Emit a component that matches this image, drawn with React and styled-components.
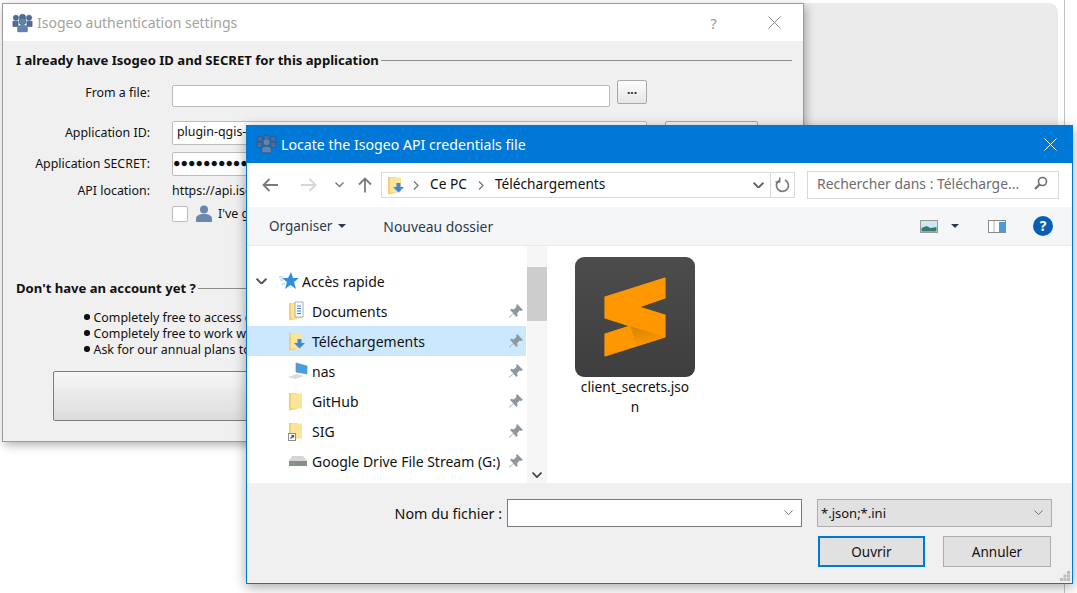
import React from "react";
import styled, { createGlobalStyle } from "styled-components";

const GlobalStyle = createGlobalStyle`
  html, body {
    margin: 0;
    padding: 0;
    background: #fff;
    overflow: hidden;
  }
  * {
    box-sizing: border-box;
  }
`;

const UI_FONT = `"Noto Sans", "Open Sans", sans-serif`;

const Desktop = styled.div`
  position: relative;
  width: 1077px;
  height: 593px;
  overflow: hidden;
  background: #fff;
  font-family: ${UI_FONT};
`;

const PagePanel = styled.div`
  position: absolute;
  left: 780px;
  top: 3px;
  width: 278px;
  height: 400px;
  background: #ebebeb;
  border-radius: 9px;
`;

const PageEdge = styled.div`
  position: absolute;
  left: 1064px;
  top: 0;
  width: 1px;
  height: 593px;
  background: #c4c4c4;
`;

/* back window */
const BackWindow = styled.div`
  position: absolute;
  left: 2px;
  top: 3px;
  width: 802px;
  height: 439px;
  display: flex;
  flex-direction: column;
  border: 1px solid #9b9b9b;
  background: #f0f0f0;
  box-shadow: 2px 3px 9px rgba(0, 0, 0, 0.3);
`;

const BackTitleBar = styled.div`
  height: 37px;
  flex: none;
  background: #fff;
  display: flex;
  align-items: center;
  padding-left: 9px;
  gap: 4px;
  color: #a3a3a3;
  font-size: 14px;
`;

const BackTitle = styled.span`
  flex: 1;
`;

const TitleGlyph = styled.span`
  width: 57px;
  display: flex;
  justify-content: center;
  color: #999;
  font-size: 15px;
`;

const BackBody = styled.div`
  flex: 1;
  display: flex;
  flex-direction: column;
  padding: 9px 11px 0 13px;
  color: #111;
  font-size: 12.4px;
  line-height: 17px;
`;

const SectionHead = styled.div`
  display: flex;
  align-items: center;
  gap: 2px;
  height: 20px;
  margin-top: ${(p) => p.$top || 0}px;
  font-weight: 700;
  font-size: 13.1px;
  white-space: nowrap;
  &::after {
    content: "";
    flex: 1;
    height: 1px;
    background: #8c8c8c;
  }
`;

const TextField = styled.div`
  height: ${(p) => p.$h || 22}px;
  width: ${(p) => p.$w || 438}px;
  margin-top: ${(p) => p.$top || 0}px;
  background: #fff;
  border: 1px solid #bcbcbc;
  border-radius: 2px;
  padding-left: 4px;
  line-height: ${(p) => (p.$h || 22) - 4}px;
  text-indent: ${(p) => p.$indent || 0}px;
  white-space: nowrap;
  overflow: hidden;
`;

const FormRow = styled.div`
  display: flex;
  align-items: center;
  margin-top: ${(p) => p.$top || 0}px;
`;

const FileRow = styled(FormRow)`
  align-items: flex-start;
  label {
    line-height: 26px;
  }
`;

const RowLabel = styled.label`
  width: 134px;
  margin-right: 22px;
  margin-bottom: ${(p) => p.$raise || 0}px;
  text-align: right;
  white-space: nowrap;
`;

const DotsButton = styled.button`
  width: 30px;
  height: 24px;
  margin-left: 7px;
  padding: 0 0 6px;
  border: 1px solid #a9a9a9;
  border-radius: 2px;
  background: linear-gradient(#fdfdfd, #e6e6e6);
  font: 700 12px ${UI_FONT};
  color: #222;
`;

const SideButton = styled.div`
  width: 93px;
  height: 24px;
  margin-left: 18px;
  border: 1px solid #a9a9a9;
  border-radius: 2px;
  background: #f5f5f5;
`;

const CheckRow = styled.div`
  display: flex;
  align-items: center;
  margin: 6px 0 0 156px;
  height: 17px;
  white-space: nowrap;
`;

const CheckBox = styled.div`
  width: 16px;
  height: 16px;
  margin-right: 8px;
  background: #fff;
  border: 1px solid #bcbcbc;
  border-radius: 2px;
`;

const CheckText = styled.span`
  margin-left: 6px;
`;

const BulletList = styled.ul`
  list-style: none;
  margin: 11px 0 0 68px;
  padding: 0;
  white-space: nowrap;
`;

const Bullet = styled.li`
  display: flex;
  align-items: center;
  gap: 4px;
  height: 16px;
  &::before {
    content: "";
    flex: none;
    width: 5.5px;
    height: 5.5px;
    border-radius: 50%;
    background: #111;
  }
`;

const BigButton = styled.div`
  width: 700px;
  height: 50px;
  margin: 14px 0 0 37px;
  border: 1px solid #7d7d7d;
  border-radius: 2px;
  background: linear-gradient(#f6f6f6, #dcdcdc);
`;

/* front window */
const FrontWindow = styled.div`
  position: absolute;
  left: 246px;
  top: 125px;
  width: 827px;
  height: 459px;
  display: flex;
  flex-direction: column;
  border: 1px solid #0078d7;
  border-top: none;
  background: #fff;
  box-shadow: 0 3px 12px rgba(0, 0, 0, 0.35);
`;

const FrontTitleBar = styled.div`
  height: 38px;
  flex: none;
  margin: 0 -1px;
  background: #0078d7;
  color: #fff;
  display: flex;
  align-items: center;
  padding-left: 10px;
  gap: 4px;
  font-size: 14.15px;
`;

const FrontTitle = styled.span`
  flex: 1;
`;

const CloseSlot = styled.span`
  width: 46px;
  display: flex;
  justify-content: center;
`;

const NavRow = styled.div`
  height: 44px;
  flex: none;
  display: flex;
  align-items: center;
`;

const NavButtons = styled.div`
  width: 134px;
  flex: none;
  display: flex;
  align-items: center;
`;

const NavSlot = styled.span`
  width: ${(p) => p.$w}px;
  display: flex;
  justify-content: center;
`;

const AddressBar = styled.div`
  width: 414px;
  height: 26px;
  display: flex;
  align-items: center;
  border: 1px solid #d9d9d9;
  font-size: 13.7px;
  color: #111;
  padding-left: 5px;
`;

const Crumbs = styled.div`
  flex: 1;
  display: flex;
  align-items: center;
  padding-bottom: 4px;
  white-space: nowrap;
`;

const CrumbSep = styled.span`
  margin: 4px 11px 0 ${(p) => p.$left}px;
  display: flex;
`;

const AddressEnd = styled.span`
  width: 24px;
  height: 100%;
  display: flex;
  align-items: center;
  justify-content: center;
  border-left: ${(p) => (p.$line ? "1px solid #d9d9d9" : "none")};
`;

const SearchBox = styled.div`
  width: 252px;
  height: 28px;
  margin-left: 12px;
  border: 1px solid #d9d9d9;
  display: flex;
  align-items: center;
  justify-content: space-between;
  padding: 0 10px 4px 9px;
  color: #6d6d6d;
  font-size: 13.9px;
  white-space: nowrap;
`;

const Toolbar = styled.div`
  height: 39px;
  flex: none;
  background: #f5f6f7;
  border-bottom: 1px solid #e8e9ea;
  display: flex;
  align-items: center;
  padding: 0 19px 0 22px;
  color: #2a3a50;
  font-size: 13.5px;
`;

const ToolItem = styled.span`
  display: flex;
  align-items: center;
  gap: ${(p) => p.$gap || 6}px;
  margin-right: ${(p) => p.$mr || 0}px;
  margin-left: ${(p) => p.$ml || "0"};
  font-size: ${(p) => p.$size || 13.5}px;
`;

const Content = styled.div`
  flex: 1;
  display: flex;
  min-height: 0;
  background: #fff;
`;

const Sidebar = styled.nav`
  width: 280px;
  flex: none;
  padding: 20px 1px 0 0;
  font-size: 14px;
  color: #111;
`;

const TreeRow = styled.div`
  height: 30px;
  display: flex;
  align-items: center;
  padding-left: ${(p) => p.$pad}px;
  padding-right: 3px;
  background: ${(p) => (p.$active ? "#cce8ff" : "transparent")};
  white-space: nowrap;
`;

const TreeIcon = styled.span`
  width: ${(p) => p.$w || 26}px;
  flex: none;
  display: flex;
`;

const TreeLabel = styled.span`
  flex: 1;
`;

const ScrollTrack = styled.div`
  width: 20px;
  flex: none;
  margin-right: 2px;
  background: #f6f6f6;
  padding-top: 21px;
  display: flex;
  flex-direction: column;
  align-items: center;
`;

const ScrollThumb = styled.div`
  width: 100%;
  height: 54px;
  background: #cdcdcd;
`;

const ScrollArrow = styled.span`
  margin-top: auto;
  margin-bottom: 5px;
  display: flex;
`;

const FilePane = styled.div`
  flex: 1;
  padding: 11px 0 0 25px;
`;

const FileTile = styled.div`
  width: 122px;
  display: flex;
  flex-direction: column;
  align-items: center;
  font-size: 13.7px;
  line-height: 20px;
  color: #111;
  text-align: center;
`;

const FileName = styled.span`
  width: 112px;
  word-break: break-all;
`;

const Footer = styled.div`
  height: 100px;
  flex: none;
  position: relative;
  background: #f0f0f0;
  padding: 16px 20px 0 0;
  display: flex;
  flex-direction: column;
  gap: 9px;
  font-size: 13.5px;
  color: #111;
`;

const FooterRow = styled.div`
  display: flex;
  justify-content: flex-end;
  align-items: center;
  gap: ${(p) => p.$gap || 0}px;
`;

const NameLabel = styled.span`
  margin: 1px 5px 0 0;
  font-size: 14.3px;
`;

const NameInput = styled.div`
  width: 295px;
  height: 28px;
  background: #fff;
  border: 1px solid #7a7a7a;
  display: flex;
  align-items: center;
  justify-content: flex-end;
  padding-right: 8px;
`;

const FilterSelect = styled.div`
  width: 235px;
  height: 28px;
  margin-left: 15px;
  background: #e1e1e1;
  border: 1px solid #adadad;
  display: flex;
  align-items: center;
  justify-content: space-between;
  padding: 0 8px 0 3px;
  font-size: 13px;
`;

const DialogButton = styled.button`
  width: ${(p) => (p.$primary ? 107 : 108)}px;
  height: 31px;
  margin-right: 1px;
  background: #e1e1e1;
  border: ${(p) => (p.$primary ? "2px solid #0078d7" : "1px solid #adadad")};
  font: 13.5px ${UI_FONT};
  color: #111;
  padding: 0;
`;

const Grip = styled.svg`
  position: absolute;
  right: 2px;
  bottom: 2px;
`;

function PeopleIcon() {
  return (
    <svg width="21" height="20" viewBox="0 0 24 22">
      <g fill="#4e6e99" stroke="#2f4a6e" strokeWidth="0.6">
        <circle cx="4.5" cy="5" r="3" />
        <circle cx="19.5" cy="5" r="3" />
        <circle cx="12" cy="4.500" r="3.500" />
        <path d="M1 9h6v6H1zM17 9h6v6h-6z" />
        <circle cx="12" cy="9" r="4" fill="#6283ad" />
        <path d="M6.500 21v-4c0-2.500 2-3.500 5.500-3.500s5.500 1 5.500 3.500v4z" fill="#6283ad" />
      </g>
    </svg>
  );
}

function PersonIcon() {
  return (
    <svg width="16" height="18" viewBox="0 0 16 18">
      <circle cx="8" cy="4.5" r="4" fill="#6a87ad" />
      <path d="M0 17v-3c0-3.500 3-5 8-5s8 1.500 8 5v3z" fill="#6a87ad" />
    </svg>
  );
}

function CrossIcon({ color, size = 13 }) {
  return (
    <svg width={size} height={size} viewBox="0 0 13 13">
      <path d="M.5.5l12 12M12.5.5l-12 12" stroke={color} strokeWidth="1" fill="none" />
    </svg>
  );
}

function Arrow({ dir, color }) {
  const paths = {
    left: "M1 8h15M7.500 2L1.500 8l6 6",
    right: "M0 8h15M8.500 2l6 6-6 6",
    up: "M8 15.500V1M2 7.500l6-6 6 6",
  };
  return (
    <svg width="16" height="16" viewBox="0 0 16 16">
      <path d={paths[dir]} stroke={color} strokeWidth="1.8" fill="none" />
    </svg>
  );
}

function Chevron({ color = "#555", width = 9, stroke = 1.6 }) {
  return (
    <svg width={width} height={width * 0.62} viewBox="0 0 10 6">
      <path d="M.5.5L5 5 9.500.5" stroke={color} strokeWidth={stroke} fill="none" />
    </svg>
  );
}

function CrumbChevron() {
  return (
    <svg width="6" height="9" viewBox="0 0 6 9">
      <path d="M1 .5l4 4-4 4" stroke="#777" strokeWidth="1.3" fill="none" />
    </svg>
  );
}

function Caret({ color = "#2a3a50" }) {
  return (
    <svg width="8" height="4" viewBox="0 0 8 4">
      <path d="M0 0h8L4 4z" fill={color} />
    </svg>
  );
}

function Folder({ badge }) {
  return (
    <svg width="22" height="20" viewBox="0 0 22 20">
      <path d="M1 2h8v16l-8 1.500z" fill="#f3cf72" />
      <path d="M3 2.500h11v15H3z" fill="#fce49a" />
      {badge === "doc" && (
        <g>
          <path d="M7 1h8v15H7z" fill="#fff" stroke="#8a9aaa" strokeWidth="0.8" />
          <path d="M9 5h4M9 7.500h4M9 10h4M9 12.500h4" stroke="#3d7fc4" strokeWidth="1" />
        </g>
      )}
      {badge === "down" && (
        <path d="M9.500 8h4v4H17l-5.500 5.500L6 12h3.500z" fill="#3c8ad6" />
      )}
      {badge === "link" && (
        <g>
          <rect x="0.500" y="12.500" width="7" height="7" fill="#fff" stroke="#8a8a8a" />
          <path d="M2.500 17.500l3-3M3.500 14.500h2v2" stroke="#1f4f9a" strokeWidth="1.2" fill="none" />
        </g>
      )}
    </svg>
  );
}

function MonitorIcon() {
  return (
    <svg width="20" height="18" viewBox="0 0 20 18">
      <path d="M8 1l11 3v8L8 10z" fill="#3fa2e6" stroke="#7a8a99" strokeWidth="0.7" />
      <path d="M0 15l9-3 7 2-9 3z" fill="#dcdcdc" />
    </svg>
  );
}

function DriveIcon() {
  return (
    <svg width="20" height="11" viewBox="0 0 20 11">
      <path d="M4 0h11l4 5H1z" fill="#d6d6d6" />
      <path d="M1 5h18v5H1z" fill="#8c8c8c" />
      <path d="M3 7h4v1.500H3z" fill="#5fc25f" />
    </svg>
  );
}

function StarIcon() {
  return (
    <svg width="20" height="18" viewBox="0 0 20 18">
      <path d="M12 0l2 6h6l-5 4 2 7-5.500-4L6 17l2-7-5-4h6z" fill="#2f8fdc" />
      <path d="M0 5h4M1 8h3M3 12h3" stroke="#8fc4ee" strokeWidth="1" />
    </svg>
  );
}

function PinIcon() {
  return (
    <svg width="14" height="14" viewBox="0 0 13 13">
      <path d="M7.500 0L13 5.500l-2 1-1-.5-2.500 2.500.5 2.500-1 1L4 9 .5 12.500 0 12l4-3.500L1 5.500l1-1 2.500.5L7 2.500 6.500 1.500z" fill="#8f979e" />
    </svg>
  );
}

function RefreshIcon() {
  return (
    <svg width="15" height="16" viewBox="0 0 15 16">
      <path d="M4.500 3.200A6 6 0 1 0 10 3" stroke="#7a7a7a" strokeWidth="1.700" fill="none" />
      <path d="M4.700.5v4.500H.5" stroke="#7a7a7a" strokeWidth="1.500" fill="none" />
    </svg>
  );
}

function SearchIcon() {
  return (
    <svg width="14" height="14" viewBox="0 0 14 14">
      <circle cx="8.500" cy="5.500" r="4" stroke="#6d6d6d" strokeWidth="1.600" fill="none" />
      <path d="M5.500 8.500L1 13" stroke="#6d6d6d" strokeWidth="2.200" />
    </svg>
  );
}

function ViewIcon() {
  return (
    <svg width="18" height="13" viewBox="0 0 18 13">
      <rect x="0.500" y="0.500" width="17" height="12" fill="#cfe6f5" stroke="#9a9a9a" />
      <path d="M1.500 8l5-2 4 2 6-1v4.500h-15z" fill="#3a7a6a" />
    </svg>
  );
}

function PaneIcon() {
  return (
    <svg width="18" height="13" viewBox="0 0 18 13">
      <rect x="0.500" y="0.500" width="17" height="12" fill="#fff" stroke="#8a8a8a" />
      <path d="M6 1v11" stroke="#b0b0b0" />
      <rect x="11" y="2" width="6" height="10" fill="#4a9ade" />
    </svg>
  );
}

function HelpIcon() {
  return (
    <svg width="20" height="20" viewBox="0 0 20 20">
      <circle cx="10" cy="10" r="10" fill="#0a5fb4" />
      <text x="10" y="15" textAnchor="middle" fontSize="14" fontWeight="700" fill="#fff" fontFamily="Noto Sans">
        ?
      </text>
    </svg>
  );
}

function SublimeIcon() {
  return (
    <svg width="120" height="120" viewBox="0 0 120 120">
      <defs>
        <linearGradient id="tile" x1="0" y1="0" x2="0" y2="1">
          <stop offset="0" stopColor="#4c4c4c" />
          <stop offset="1" stopColor="#3e3e3e" />
        </linearGradient>
        <linearGradient id="fold" x1="0.300" y1="0" x2="0.500" y2="1">
          <stop offset="0" stopColor="#d98400" />
          <stop offset="1" stopColor="#ff9800" />
        </linearGradient>
      </defs>
      <rect width="120" height="120" rx="9" fill="url(#tile)" />
      <path
        d="M30 40L90 21V41L64 50L90 58V80L30 99V77L55 69L30 61Z"
        fill="#ff9800"
        stroke="#ff9800"
        strokeWidth="1.200"
        strokeLinejoin="round"
      />
      <path d="M55 69L90 80L62 89Z" fill="url(#fold)" />
    </svg>
  );
}

const quickAccess = [
  { label: "Documents", icon: <Folder badge="doc" /> },
  { label: "Téléchargements", icon: <Folder badge="down" />, active: true },
  { label: "nas", icon: <MonitorIcon /> },
  { label: "GitHub", icon: <Folder /> },
  { label: "SIG", icon: <Folder badge="link" /> },
  { label: "Google Drive File Stream (G:)", icon: <DriveIcon /> },
];

function App() {
  return (
    <Desktop>
      <GlobalStyle />
      <PagePanel />
      <PageEdge />

      <BackWindow>
        <BackTitleBar>
          <PeopleIcon />
          <BackTitle>Isogeo authentication settings</BackTitle>
          <TitleGlyph>?</TitleGlyph>
          <TitleGlyph>
            <CrossIcon color="#8a8a8a" />
          </TitleGlyph>
        </BackTitleBar>
        <BackBody>
          <SectionHead>I already have Isogeo ID and SECRET for this application</SectionHead>
          <FileRow $top={10}>
            <RowLabel>From a file:</RowLabel>
            <TextField $top={5} />
            <DotsButton>...</DotsButton>
          </FileRow>
          <FormRow $top={14}>
            <RowLabel $raise={1}>Application ID:</RowLabel>
            <TextField $h={24} $w={475}>plugin-qgis-desktop</TextField>
            <SideButton />
          </FormRow>
          <FormRow $top={7}>
            <RowLabel $raise={2}>Application SECRET:</RowLabel>
            <TextField $h={24} $w={475} $indent={-4}>●●●●●●●●●●●●●●●●●●●●</TextField>
          </FormRow>
          <FormRow $top={6}>
            <RowLabel>API location:</RowLabel>
            <span>https://api.isogeo.com</span>
          </FormRow>
          <CheckRow>
            <CheckBox />
            <PersonIcon />
            <CheckText>I've got</CheckText>
          </CheckRow>
          <SectionHead $top={56}>Don't have an account yet ?</SectionHead>
          <BulletList>
            <Bullet>Completely free to access data</Bullet>
            <Bullet>Completely free to work with</Bullet>
            <Bullet>Ask for our annual plans to</Bullet>
          </BulletList>
          <BigButton />
        </BackBody>
      </BackWindow>

      <FrontWindow>
        <FrontTitleBar>
          <PeopleIcon />
          <FrontTitle>Locate the Isogeo API credentials file</FrontTitle>
          <CloseSlot>
            <CrossIcon color="#fff" />
          </CloseSlot>
        </FrontTitleBar>
        <NavRow>
          <NavButtons>
            <NavSlot $w={46}>
              <Arrow dir="left" color="#7a7a7a" />
            </NavSlot>
            <NavSlot $w={32}>
              <Arrow dir="right" color="#d6d6d6" />
            </NavSlot>
            <NavSlot $w={28}>
              <Chevron color="#7a7a7a" width={9} />
            </NavSlot>
            <NavSlot $w={24}>
              <Arrow dir="up" color="#7a7a7a" />
            </NavSlot>
          </NavButtons>
          <AddressBar>
            <Folder badge="down" />
            <Crumbs>
              <CrumbSep $left={4}>
                <CrumbChevron />
              </CrumbSep>
              Ce PC
              <CrumbSep $left={11}>
                <CrumbChevron />
              </CrumbSep>
              Téléchargements
            </Crumbs>
            <AddressEnd>
              <Chevron color="#666" width={11} stroke={1.8} />
            </AddressEnd>
            <AddressEnd $line>
              <RefreshIcon />
            </AddressEnd>
          </AddressBar>
          <SearchBox>
            Rechercher dans : Télécharge...
            <SearchIcon />
          </SearchBox>
        </NavRow>
        <Toolbar>
          <ToolItem $mr={37}>
            Organiser <Caret />
          </ToolItem>
          <ToolItem $size={13.9}>Nouveau dossier</ToolItem>
          <ToolItem $ml="auto" $gap={13}>
            <ViewIcon />
            <Caret />
          </ToolItem>
          <ToolItem $ml="29px">
            <PaneIcon />
          </ToolItem>
          <ToolItem $ml="27px">
            <HelpIcon />
          </ToolItem>
        </Toolbar>
        <Content>
          <Sidebar>
            <TreeRow $pad={9}>
              <TreeIcon $w={23}>
                <Chevron color="#555" width={11} stroke={1.8} />
              </TreeIcon>
              <TreeIcon $w={23}>
                <StarIcon />
              </TreeIcon>
              <TreeLabel>Accès rapide</TreeLabel>
            </TreeRow>
            {quickAccess.map((item) => (
              <TreeRow key={item.label} $pad={41} $active={item.active}>
                <TreeIcon $w={24}>{item.icon}</TreeIcon>
                <TreeLabel>{item.label}</TreeLabel>
                <PinIcon />
              </TreeRow>
            ))}
          </Sidebar>
          <ScrollTrack>
            <ScrollThumb />
            <ScrollArrow>
              <Chevron color="#444" width={10} stroke={1.8} />
            </ScrollArrow>
          </ScrollTrack>
          <FilePane>
            <FileTile>
              <SublimeIcon />
              <FileName>client_secrets.json</FileName>
            </FileTile>
          </FilePane>
        </Content>
        <Footer>
          <FooterRow>
            <NameLabel>Nom du fichier :</NameLabel>
            <NameInput>
              <Chevron color="#666" width={9} stroke={1} />
            </NameInput>
            <FilterSelect>
              *.json;*.ini
              <Chevron color="#666" width={9} stroke={1} />
            </FilterSelect>
          </FooterRow>
          <FooterRow $gap={17}>
            <DialogButton $primary>Ouvrir</DialogButton>
            <DialogButton>Annuler</DialogButton>
          </FooterRow>
          <Grip width="10" height="10" viewBox="0 0 10 10" fill="#bdbdbd">
            <path d="M7 0h3v3H7zM3.500 3.500h3v3h-3zM7 3.500h3v3H7zM0 7h3v3H0zM3.500 7h3v3h-3zM7 7h3v3H7z" />
          </Grip>
        </Footer>
      </FrontWindow>
    </Desktop>
  );
}

export default App;
